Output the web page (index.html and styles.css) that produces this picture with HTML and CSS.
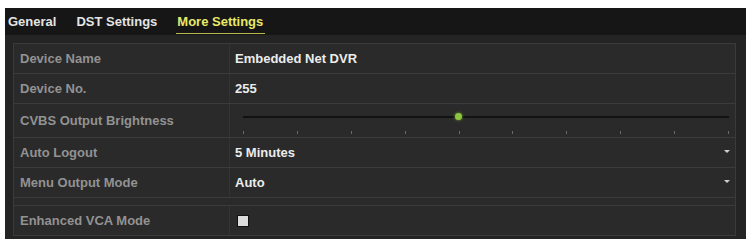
FILE: index.html
```html
<!DOCTYPE html>
<html lang="en">
<head>
    <meta charset="UTF-8">
    <title>More Settings</title>
    <link rel="stylesheet" href="styles.css">
</head>
<body>
    <div class="window">
        <div class="tabs">
            <span class="tab">General</span>
            <span class="tab">DST Settings</span>
            <span class="tab active">More Settings</span>
        </div>

        <div class="content">
            <div class="panel">
                <div class="row">
                    <div class="label">Device Name</div>
                    <div class="value">Embedded Net DVR</div>
                </div>
                <div class="row">
                    <div class="label">Device No.</div>
                    <div class="value">255</div>
                </div>
                <div class="row tall">
                    <div class="label">CVBS Output Brightness</div>
                    <div class="value">
                        <div class="slider">
                            <div class="track"></div>
                            <div class="knob"></div>
                            <div class="ticks">
                                <i></i><i></i><i></i><i></i><i></i><i></i><i></i><i></i><i></i><i></i>
                            </div>
                        </div>
                    </div>
                </div>
                <div class="row">
                    <div class="label">Auto Logout</div>
                    <div class="value select">5 Minutes<span class="arrow"></span></div>
                </div>
                <div class="row">
                    <div class="label">Menu Output Mode</div>
                    <div class="value select">Auto<span class="arrow"></span></div>
                </div>
                <div class="spacer"></div>
                <div class="row last">
                    <div class="label">Enhanced VCA Mode</div>
                    <div class="value"><span class="checkbox"></span></div>
                </div>
            </div>
        </div>
    </div>
</body>
</html>
```

FILE: styles.css
```css
body {
    margin: 0;
    background-color: #ffffff;
    font-family: "Liberation Sans", Arial, sans-serif;
}
.window {
    margin: 8px 0 0 5px;
    background-color: #242424;
    height: 231px;
    overflow: hidden;
}
.tabs {
    display: flex;
    gap: 20px;
    height: 27px;
    padding-left: 3px;
    background-color: #161616;
}
.tab {
    position: relative;
    line-height: 27px;
    font-size: 13px;
    font-weight: bold;
    color: #e4e4e4;
}
.tab.active {
    color: #e9e96a;
}
.tab.active::after {
    content: "";
    position: absolute;
    left: -1px;
    right: -2px;
    bottom: 1px;
    height: 1px;
    background-color: #b7b84e;
}
.content {
    padding: 8px 10px 0 8px;
}
.panel {
    border: 1px solid #3a3a3a;
    border-bottom: none;
    background-color: #2a2a2a;
}
.row {
    display: grid;
    grid-template-columns: 216px 1fr;
    height: 29px;
    border-bottom: 1px solid #3b3b3b;
}
.row.tall {
    height: 33px;
}
.label {
    display: flex;
    align-items: center;
    padding-left: 6px;
    border-right: 1px solid #333333;
    font-size: 13px;
    font-weight: bold;
    color: #929292;
}
.value {
    position: relative;
    display: flex;
    align-items: center;
    padding-left: 5px;
    font-size: 13px;
    font-weight: bold;
    color: #ececec;
}
.spacer {
    height: 7px;
    border-bottom: 1px solid #3b3b3b;
}
.slider {
    position: relative;
    width: 486px;
    height: 33px;
    margin-left: 8px;
}
.track {
    position: absolute;
    left: 0;
    right: 0;
    top: 12px;
    height: 2px;
    background-color: #121212;
}
.knob {
    position: absolute;
    left: 212px;
    top: 9px;
    width: 7px;
    height: 7px;
    border-radius: 50%;
    background-color: #8cc63f;
    box-shadow: 0 0 3px #6fa52d;
}
.ticks {
    position: absolute;
    left: 0;
    right: 0;
    top: 27px;
    display: flex;
    justify-content: space-between;
}
.ticks i {
    width: 1px;
    height: 3px;
    background-color: #6a6a6a;
}
.arrow {
    position: absolute;
    right: 5px;
    top: 12px;
    border-left: 3px solid transparent;
    border-right: 3px solid transparent;
    border-top: 3px solid #d0d0d0;
}
.checkbox {
    display: inline-block;
    width: 10px;
    height: 10px;
    margin-left: 2px;
    background-color: #dcdcdc;
    border: 1px solid #111111;
}
```
